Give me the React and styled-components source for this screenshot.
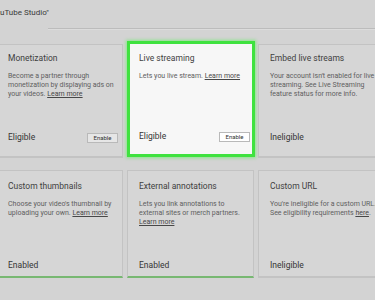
import styled, { createGlobalStyle } from "styled-components";

const GlobalStyle = createGlobalStyle`
  body {
    margin: 0;
    background: #d3d3d3;
    font-family: Roboto, "Liberation Sans", sans-serif;
  }
`;

const Page = styled.div`
  width: 375px;
  height: 300px;
  overflow: hidden;
  background: #d3d3d3;
`;

const Header = styled.div`
  height: 28px;
  display: flex;
  align-items: flex-start;
  padding-top: 8px;
  box-sizing: border-box;
  font-size: 8px;
  color: #3a3a3a;
`;

const Rule = styled.div`
  margin-left: 48px;
  border-top: 1px solid #bcbcbc;
  border-bottom: 1px solid #dcdcdc;
`;

const Grid = styled.div`
  display: grid;
  grid-template-columns: repeat(3, 127px);
  grid-template-rows: 114px 108px;
  column-gap: 4px;
  row-gap: 12px;
  margin-top: 14px;
  margin-left: -4px;
`;

const Card = styled.div`
  display: flex;
  flex-direction: column;
  box-sizing: border-box;
  background: #d6d6d6;
  border: 1px solid #c3c3c3;
  border-bottom: 2px solid ${(p) => (p.$green ? "#78b872" : "#c3c3c3")};
  padding: ${(p) => (p.$row === 1 ? "8px 11px 13px" : "10px 11px 5px")};
`;

const HighlightCard = styled(Card)`
  background: #f7f7f7;
  border: 3px solid #3fe23f;
  box-shadow: 0 0 3px 1px rgba(90, 240, 90, 0.6);
  margin: -3px -1px 1px 0;
  padding: 9px 9px 12px;
`;

const Title = styled.div`
  font-size: 8.5px;
  line-height: 11px;
  color: #3f3f3f;
`;

const Desc = styled.div`
  margin-top: 8px;
  font-size: 7px;
  line-height: 9px;
  color: #606060;
  width: 106px;
`;

const Link = styled.span`
  text-decoration: underline;
  color: #484848;
`;

const Status = styled.div`
  margin-top: auto;
  display: flex;
  align-items: center;
  justify-content: space-between;
  margin-right: -7px;
  font-size: 8.5px;
  line-height: 11px;
  color: #353535;
`;

const EnableButton = styled.span`
  width: 31px;
  height: 10px;
  box-sizing: border-box;
  border: 1px solid #b9b9b9;
  background: ${(p) => (p.$light ? "#ffffff" : "#e6e6e6")};
  font-size: 6px;
  line-height: 8px;
  text-align: center;
  color: #333;
`;

const cards = [
  {
    title: "Monetization",
    desc: "Become a partner through monetization by displaying ads on your videos. ",
    link: "Learn more",
    status: "Eligible",
    button: true,
    row: 1,
  },
  {
    title: "Live streaming",
    desc: "Lets you live stream. ",
    link: "Learn more",
    status: "Eligible",
    button: true,
    highlight: true,
    row: 1,
  },
  {
    title: "Embed live streams",
    desc: "Your account isn't enabled for live streaming. See Live Streaming feature status for more info.",
    status: "Ineligible",
    row: 1,
  },
  {
    title: "Custom thumbnails",
    desc: "Choose your video's thumbnail by uploading your own. ",
    link: "Learn more",
    status: "Enabled",
    green: true,
    row: 2,
  },
  {
    title: "External annotations",
    desc: "Lets you link annotations to external sites or merch partners. ",
    link: "Learn more",
    status: "Enabled",
    green: true,
    row: 2,
  },
  {
    title: "Custom URL",
    desc: "You're ineligible for a custom URL. See eligibility requirements ",
    link: "here",
    status: "Ineligible",
    row: 2,
  },
];

const App = () => {
  return (
    <Page>
      <GlobalStyle />
      <Header>uTube Studio"</Header>
      <Rule />
      <Grid>
        {cards.map((c) => {
          const Box = c.highlight ? HighlightCard : Card;
          return (
            <Box key={c.title} $row={c.row} $green={c.green}>
              <Title>{c.title}</Title>
              <Desc>
                {c.desc}
                {c.link && <Link>{c.link}</Link>}
                {c.link && c.link !== "Learn more" ? "." : ""}
              </Desc>
              <Status>
                <span>{c.status}</span>
                {c.button && <EnableButton $light={c.highlight}>Enable</EnableButton>}
              </Status>
            </Box>
          );
        })}
      </Grid>
    </Page>
  );
};

export default App;
